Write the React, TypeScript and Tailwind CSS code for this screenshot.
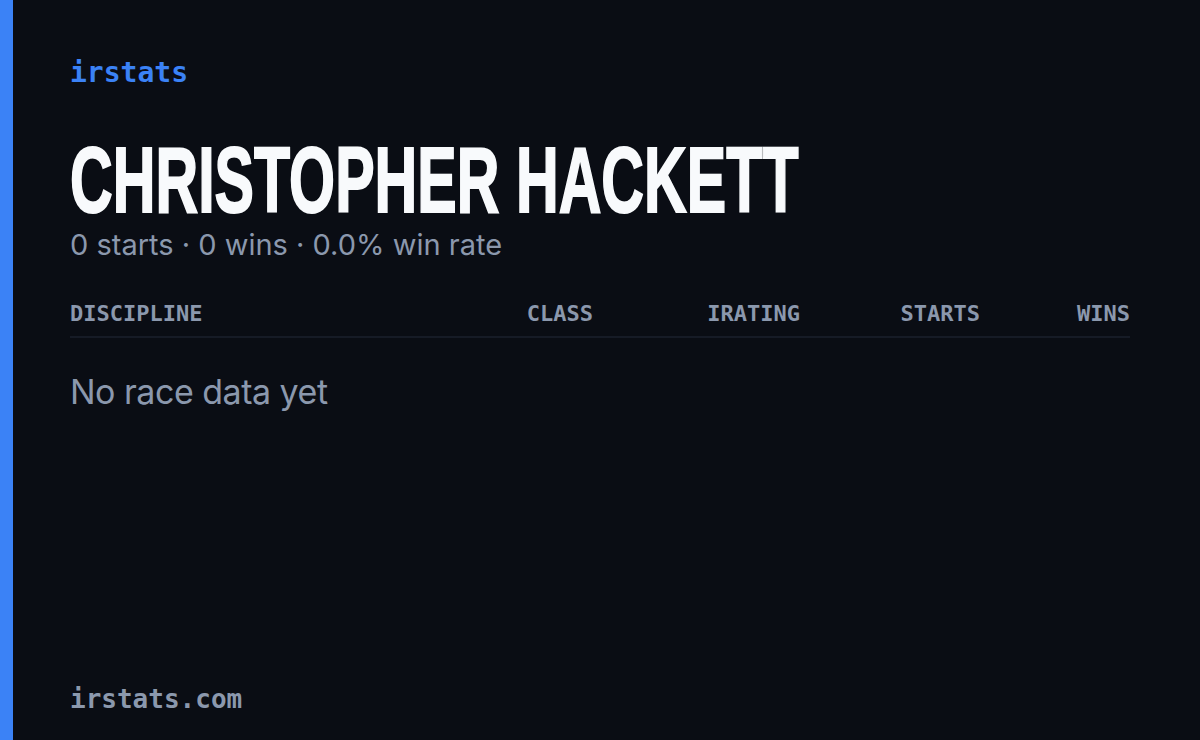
const columns = [
  { label: "DISCIPLINE", align: "text-left" },
  { label: "CLASS", align: "text-right" },
  { label: "IRATING", align: "text-right" },
  { label: "STARTS", align: "text-right" },
  { label: "WINS", align: "text-right" },
];

export default function App() {
  const starts = 0;
  const wins = 0;
  const rate = starts ? (wins / starts) * 100 : 0;

  return (
    <div className="flex h-[740px] w-[1200px] overflow-hidden bg-[#0a0d14]">
      <div className="w-[13px] shrink-0 bg-[#3b82f6]" />
      <div className="flex min-w-0 flex-1 flex-col pl-[57px] pr-[70px]">
        <div className="mt-[53px] font-['DejaVu_Sans_Mono',monospace] text-[28px] font-bold leading-[40px] text-[#3b82f6]">
          irstats
        </div>

        <h1 className="mt-[47px] h-[80px] w-max origin-left scale-x-[0.643] whitespace-nowrap font-['Liberation_Sans',sans-serif] text-[92px] font-bold leading-[80px] text-[#f8fafc] [-webkit-text-stroke:2px_#f8fafc]">
          CHRISTOPHER HACKETT
        </h1>

        <p className="mt-[7px] font-['Inter',sans-serif] text-[29px] leading-[36px] text-[#8b98ad]">
          {starts} starts · {wins} wins · {rate.toFixed(1)}% win rate
        </p>

        <div className="mt-[38px] grid grid-cols-[1fr_120px_207px_180px_150px] border-b-2 border-[#161b26] pb-[9px] font-['DejaVu_Sans_Mono',monospace] text-[22px] font-bold leading-[26px] text-[#8b98ad]">
          {columns.map((c) => (
            <div key={c.label} className={c.align}>
              {c.label}
            </div>
          ))}
        </div>

        <div className="mt-[34px] font-['Inter',sans-serif] text-[34px] leading-[40px] tracking-[-0.5px] text-[#8b98ad]">
          No race data yet
        </div>

        <div className="mt-auto mb-[24px] font-['DejaVu_Sans_Mono',monospace] text-[26px] font-bold leading-[34px] text-[#8b98ad]">
          irstats.com
        </div>
      </div>
    </div>
  );
}
